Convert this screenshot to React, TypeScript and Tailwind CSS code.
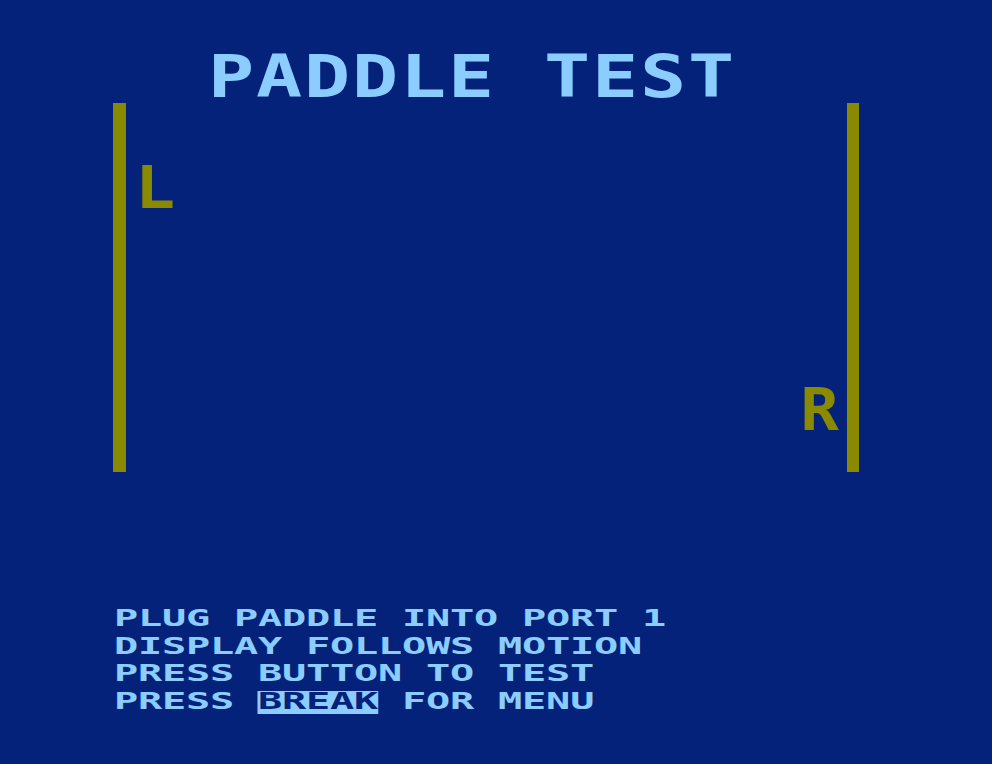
import React from "react";

// Paddle test screen: title, two olive paddle rails with L / R markers, and instructions.
const lines = [
  "PLUG PADDLE INTO PORT 1",
  "DISPLAY FOLLOWS MOTION",
  "PRESS BUTTON TO TEST",
];

export default function App() {
  return (
    <div className="flex h-[764px] w-[992px] flex-col overflow-hidden bg-[#04227a] font-['DejaVu_Sans_Mono',monospace] text-[#8ccdff]">
      {/* title row, double width characters */}
      <div className="h-[103px] pt-[47px] pl-[208px]">
        <div className="origin-left scale-x-[1.3] whitespace-pre text-[59px] font-bold leading-[59px] tracking-[1.4px]">
          PADDLE TEST
        </div>
      </div>

      {/* playfield */}
      <div className="flex h-[369px] pl-[113px] pr-[133px]">
        <div className="h-full w-[13px] bg-[#8a8a00]" />
        <div className="flex flex-1 justify-between">
          <div className="ml-[9px] mt-[56px] origin-left scale-x-[1.15] self-start text-[58px] font-bold leading-[58px] text-[#8a8a00]">
            L
          </div>
          <div className="mr-[8px] mt-[278px] origin-right scale-x-[1.1] self-start text-[58px] font-bold leading-[58px] text-[#8a8a00]">
            R
          </div>
        </div>
        <div className="h-full w-[12px] bg-[#8a8a00]" />
      </div>

      {/* instructions */}
      <div className="mt-[133px] pl-[114px]">
        <div className="origin-left scale-x-[1.75] whitespace-pre text-[23px] font-bold leading-[27.7px] tracking-[-0.13px]">
          {lines.map((line) => (
            <div key={line}>{line}</div>
          ))}
          <div>
            PRESS{" "}
            <span className="inline-block h-[23px] bg-[#8ccdff] leading-[20px] text-[#04227a]">BREAK</span>{" "}
            FOR MENU
          </div>
        </div>
      </div>
    </div>
  );
}
